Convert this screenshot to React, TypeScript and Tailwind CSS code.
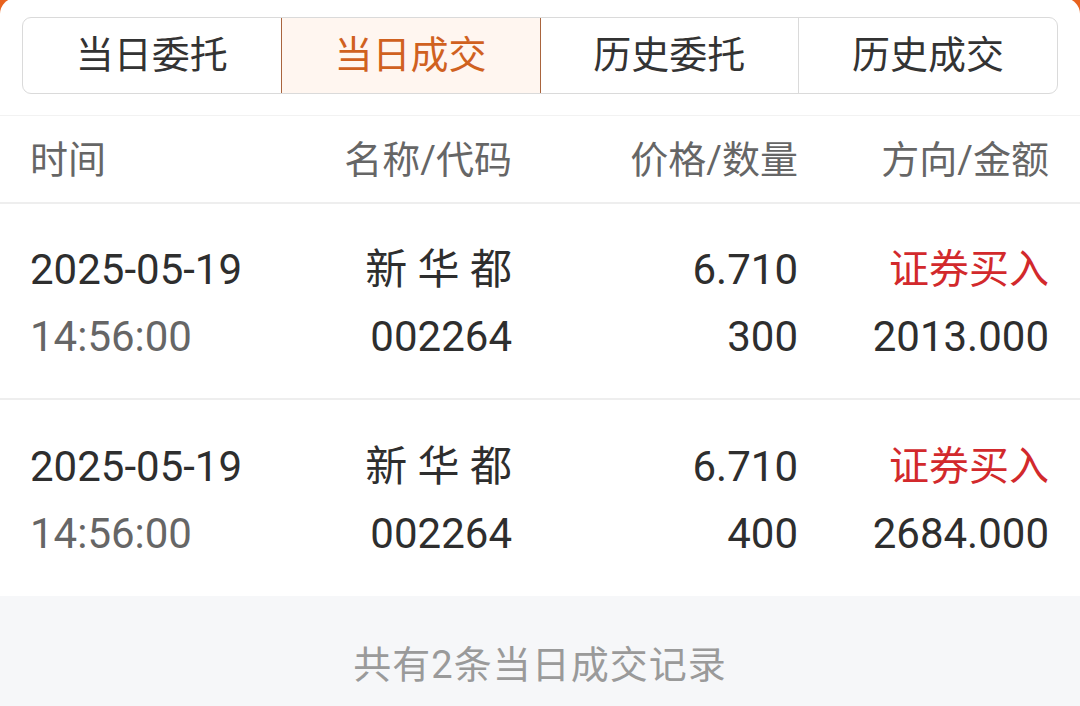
import { useState } from 'react'

type Deal = {
  date: string
  time: string
  name: string
  code: string
  price: string
  qty: string
  side: string
  amount: string
}

const TABS = ['当日委托', '当日成交', '历史委托', '历史成交']

const DEALS: Deal[] = [
  { date: '2025-05-19', time: '14:56:00', name: '新 华 都', code: '002264', price: '6.710', qty: '300', side: '证券买入', amount: '2013.000' },
  { date: '2025-05-19', time: '14:56:00', name: '新 华 都', code: '002264', price: '6.710', qty: '400', side: '证券买入', amount: '2684.000' }
]

const FONT = { fontFamily: 'Roboto, "Noto Sans CJK SC", sans-serif' }

export default function App(): JSX.Element {
  const [active, setActive] = useState(1)

  return (
    <div className="h-[706px] w-[1080px] overflow-hidden bg-[#e8621e]" style={FONT}>
      <div className="-mt-[2px] flex h-[708px] flex-col rounded-t-[16px] bg-white pt-[2px]">
        {/* 切换标签 */}
        <div className="px-[22px] pt-[17px] pb-[21px]">
          <div className="flex h-[77px] overflow-hidden rounded-[9px] border border-[#dadada]">
            {TABS.map((t, i) => (
              <button
                key={t}
                type="button"
                onClick={() => setActive(i)}
                className={`flex flex-1 items-center justify-center text-[38px] ${
                  i === active
                    ? '-my-px border border-[#a9643d] bg-[#fff6f0] text-[#d0611f]'
                    : `text-[#333] ${i > 0 && i - 1 !== active ? 'border-l border-[#dadada]' : ''}`
                }`}
              >
                {t}
              </button>
            ))}
          </div>
        </div>

        <div className="border-t border-[#f2f2f2]" />

        {/* 表头 */}
        <div className="grid h-[88px] grid-cols-[240px_242px_286px_1fr] items-center border-b-2 border-[#eeeeee] pr-[31px] pl-[30px] pt-[2px] text-[38px] text-[#666]">
          <div>时间</div>
          <div className="text-right">名称/代码</div>
          <div className="text-right">价格/数量</div>
          <div className="text-right">方向/金额</div>
        </div>

        {DEALS.map((d, i) => (
          <div
            key={i}
            className={`grid h-[196px] grid-cols-[240px_242px_286px_1fr] content-center gap-y-[21px] pt-[4px] pr-[31px] pl-[30px] text-[42px] leading-[46px] text-[#2e2e2e] ${
              i < DEALS.length - 1 ? 'border-b-2 border-[#eeeeee]' : ''
            }`}
          >
            <div>{d.date}</div>
            <div className="text-right">{d.name}</div>
            <div className="text-right">{d.price}</div>
            <div className="text-right text-[40px] text-[#d2292c]">{d.side}</div>
            <div className="text-[#666]">{d.time}</div>
            <div className="text-right">{d.code}</div>
            <div className="text-right">{d.qty}</div>
            <div className="text-right">{d.amount}</div>
          </div>
        ))}

        {/* 底部统计 */}
        <div className="flex flex-1 items-start justify-center bg-[#f6f7f9] pt-[41px]">
          <span className="text-[38px] tracking-[1px] text-[#9a9a9a]">共有2条当日成交记录</span>
        </div>
      </div>
    </div>
  )
}
